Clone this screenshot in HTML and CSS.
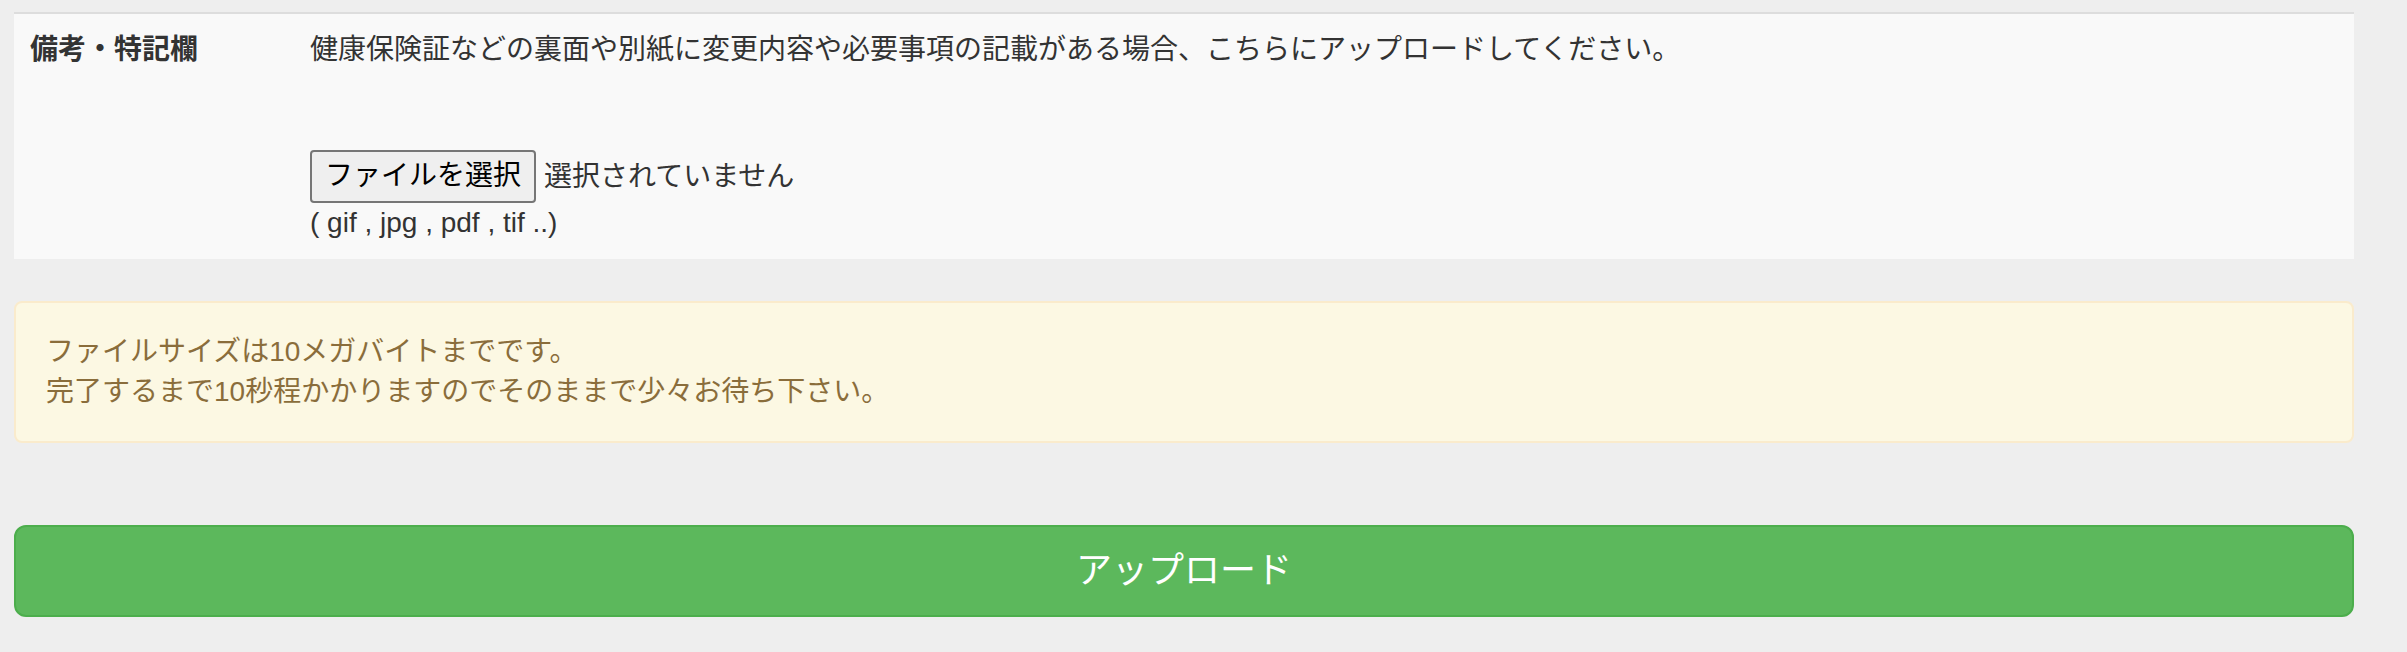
FILE: index.html
```html
<!DOCTYPE html>
<html lang="ja">

<head>
    <meta charset="UTF-8">
    <title>書類アップロード</title>
    <link rel="stylesheet" href="styles.css">
</head>

<body>
    <div class="page">
        <!-- Attachment row -->
        <table class="detail-table">
            <tr>
                <th>備考・特記欄</th>
                <td>
                    <p class="hint">健康保険証などの裏面や別紙に変更内容や必要事項の記載がある場合、こちらにアップロードしてください。</p>
                    <label class="file-field">
                        <span class="file-button">ファイルを選択</span>
                        <span class="file-status">選択されていません</span>
                    </label>
                    <div class="file-types">( gif , jpg , pdf , tif ..)</div>
                </td>
            </tr>
        </table>

        <!-- Notice -->
        <div class="alert">
            ファイルサイズは10メガバイトまでです。<br>
            完了するまで10秒程かかりますのでそのままで少々お待ち下さい。
        </div>

        <!-- Submit -->
        <button type="button" class="upload-btn">アップロード</button>
    </div>
</body>

</html>
```

FILE: styles.css
```css
body {
    margin: 0;
    background-color: #eeeeee;
    font-family: "Liberation Sans", "Noto Sans CJK JP", sans-serif;
    font-size: 28px;
    line-height: 40px;
    color: #333333;
}

.page {
    width: 2340px;
    padding: 12px 0 0 14px;
}

.detail-table {
    width: 100%;
    table-layout: fixed;
    border-collapse: collapse;
    background-color: #f9f9f9;
    margin-bottom: 42px;
}

.detail-table th,
.detail-table td {
    padding: 16px;
    vertical-align: top;
    border-top: 2px solid #dddddd;
}

.detail-table th {
    width: 248px;
    text-align: left;
    font-weight: bold;
}

.hint {
    margin: 0 0 80px;
}

.file-field {
    display: flex;
    align-items: center;
    gap: 8px;
}

.file-button {
    padding: 4px 13px 5px;
    background-color: #efefef;
    border: 2px solid #767676;
    border-radius: 4px;
    color: #000000;
}

.alert {
    padding: 29px 30px;
    margin-bottom: 82px;
    background-color: #fcf8e3;
    border: 2px solid #faebcc;
    border-radius: 8px;
    color: #8a6d3b;
}

.upload-btn {
    display: block;
    width: 100%;
    padding: 20px 32px;
    background-color: #5cb85c;
    border: 2px solid #4cae4c;
    border-radius: 12px;
    color: #ffffff;
    font-family: inherit;
    font-size: 36px;
    line-height: 48px;
    cursor: pointer;
}
```
